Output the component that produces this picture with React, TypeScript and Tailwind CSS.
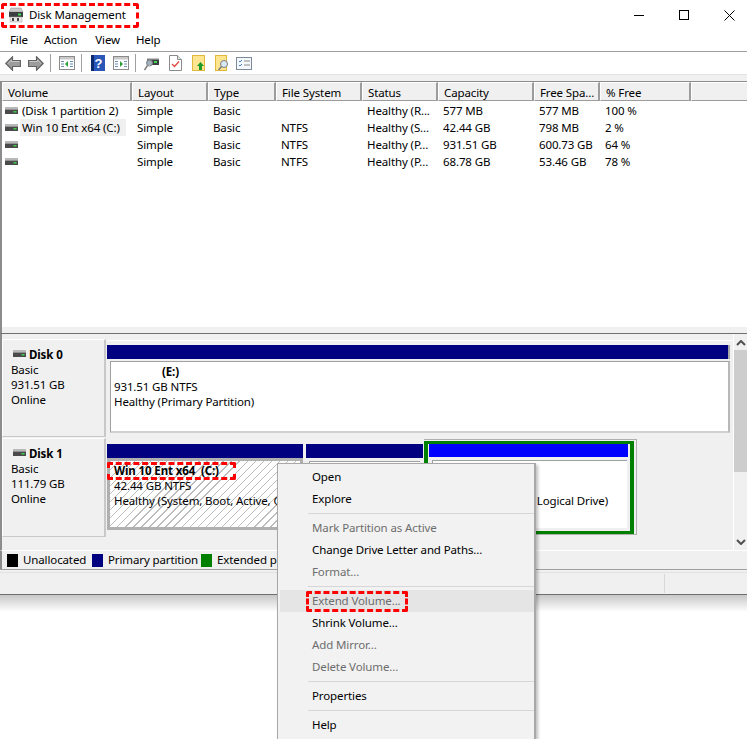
import React from "react";

const cols = [130, 76, 68, 86, 76, 96, 66, 91];
const heads = ["Volume", "Layout", "Type", "File System", "Status", "Capacity", "Free Spa...", "% Free"];
const rows = [
  ["(Disk 1 partition 2)", "Simple", "Basic", "", "Healthy (R...", "577 MB", "577 MB", "100 %"],
  ["Win 10 Ent x64 (C:)", "Simple", "Basic", "NTFS", "Healthy (S...", "42.44 GB", "798 MB", "2 %"],
  ["", "Simple", "Basic", "NTFS", "Healthy (P...", "931.51 GB", "600.73 GB", "64 %"],
  ["", "Simple", "Basic", "NTFS", "Healthy (P...", "68.78 GB", "53.46 GB", "78 %"],
];

function DriveIcon() {
  return (
    <svg width="13" height="8" viewBox="0 0 13 8" className="shrink-0">
      <rect x="0" y="0" width="13" height="2.5" fill="#b8b8b8" />
      <rect x="0" y="2.5" width="13" height="4.5" fill="#4a4a4a" />
      <rect x="8.5" y="4" width="3" height="1.5" fill="#3fd04a" />
    </svg>
  );
}

function AppIcon() {
  return (
    <svg width="16" height="16" viewBox="0 0 16 16">
      <path d="M3 1h10l2 4H1z" fill="#c9c9c9" stroke="#8a8a8a" strokeWidth="0.5" />
      <rect x="1" y="5" width="14" height="5" fill="#3c3f42" />
      <rect x="10" y="6.5" width="3" height="2" fill="#40d850" />
      <rect x="2" y="10" width="12" height="5" fill="#e8e8e8" stroke="#9a9a9a" strokeWidth="0.5" />
      <rect x="4" y="11" width="2" height="3" fill="#444" />
      <rect x="9" y="11" width="2" height="3" fill="#444" />
    </svg>
  );
}

function Arrow({ flip }: { flip?: boolean }) {
  return (
    <svg width="16" height="15" viewBox="0 0 16 15" className={flip ? "-scale-x-100" : ""}>
      <path d="M.8 7.5 7.5.8v3.7h8v6h-8v3.7z" fill="#9c9c9c" stroke="#636363" strokeWidth="1.2" />
      <path d="M3 7.5 6.5 4v1.5h8" fill="none" stroke="#c8c8c8" strokeWidth="1" />
    </svg>
  );
}

function Pane({ mode }: { mode: "l" | "r" }) {
  return (
    <svg width="16" height="14" viewBox="0 0 16 14">
      <rect x="0.5" y="0.5" width="15" height="13" fill="#fff" stroke="#8b8b8b" />
      <rect x="1" y="1" width="14" height="2.5" fill="#c9c9c9" />
      <path d="M2 5.5h3M2 8h3M2 10.5h3M11 5.5h3M11 8h3M11 10.5h3" stroke="#6b8fb5" strokeWidth="1.2" />
      {mode === "l" ? <path d="M9 5v6L6 8z" fill="#2f9e3a" /> : <path d="M7 5v6l3-3z" fill="#2f9e3a" />}
    </svg>
  );
}

function Toolbar() {
  return (
    <div className="h-[22px] shrink-0 flex items-center pl-[5px] bg-white">
      <Arrow />
      <div className="w-[7px]" />
      <Arrow flip />
      <div className="w-px h-[18px] bg-[#a0a0a0] ml-[6px] mr-[8px]" />
      <Pane mode="l" />
      <div className="w-px h-[18px] bg-[#a0a0a0] ml-[6px] mr-[9px]" />
      <svg width="14" height="16" viewBox="0 0 14 16">
        <rect width="14" height="16" fill="#2a56b8" />
        <rect x="0" y="0" width="3" height="16" fill="#0d2a70" />
        <text x="7.5" y="13" fontSize="13" fontWeight="700" textAnchor="middle" fill="#fff" fontFamily="Liberation Sans, sans-serif">?</text>
      </svg>
      <div className="w-[8px]" />
      <Pane mode="r" />
      <div className="w-px h-[18px] bg-[#a0a0a0] ml-[6px] mr-[8px]" />
      <svg width="15" height="16" viewBox="0 0 15 16">
        <rect x="3" y="4" width="12" height="6" fill="#3c3f42" />
        <rect x="3" y="3" width="12" height="1.5" fill="#c4c4c4" />
        <rect x="10" y="6" width="3" height="2" fill="#40d850" />
        <circle cx="5.5" cy="8" r="3" fill="#cfe3f2" fillOpacity="0.7" stroke="#7d7d7d" />
        <path d="M3.5 10.5 0.5 15" stroke="#7d7d7d" strokeWidth="1.5" />
      </svg>
      <div className="w-[10px]" />
      <svg width="13" height="16" viewBox="0 0 13 16">
        <path d="M.5.5h8l4 4v11H.5z" fill="#fff" stroke="#8b8b8b" />
        <path d="M8.5.5v4h4" fill="#e5e5e5" stroke="#8b8b8b" />
        <path d="M3 9l2.5 2.5L10 6.5" fill="none" stroke="#e04a3c" strokeWidth="1.3" />
      </svg>
      <div className="w-[10px]" />
      <svg width="13" height="16" viewBox="0 0 13 16">
        <rect x="0.5" y="0.5" width="12" height="15" fill="#ffe58f" stroke="#e0b93c" />
        <path d="M8.5 7 12 11h-2v4H7v-4H5z" fill="#1d9a2a" />
      </svg>
      <div className="w-[10px]" />
      <svg width="14" height="16" viewBox="0 0 14 16">
        <rect x="0.5" y="0.5" width="11" height="15" fill="#ffe58f" stroke="#e0b93c" />
        <circle cx="9" cy="9" r="3.5" fill="#d8e8f5" stroke="#7d7d7d" />
        <path d="M6.5 11.5 3.5 15" stroke="#7d7d7d" strokeWidth="1.5" />
      </svg>
      <div className="w-[7px]" />
      <svg width="16" height="13" viewBox="0 0 16 13">
        <rect x="0.5" y="0.5" width="15" height="12" fill="#f4f7fb" stroke="#7d8a99" />
        <path d="M3 4l1 1 2-2M3 8l1 1 2-2" fill="none" stroke="#3a7fd0" />
        <path d="M8 4h6M8 8h6" stroke="#8a8a8a" />
      </svg>
    </div>
  );
}

function Table() {
  return (
    <div className="h-[246px] shrink-0 bg-white border-l-2 border-[#8c8c8c] overflow-hidden">
      <div className="flex h-[20px] bg-white border-t border-[#8c8c8c]">
        {cols.map((w, i) => (
          <div
            key={i}
            style={{ width: w }}
            className="shrink-0 bg-[#f0f0f0] border-t border-l border-white border-r-2 border-r-[#9c9c9c] border-b border-b-[#9c9c9c] pl-[5px] pt-px leading-[17px]"
          >
            {heads[i]}
          </div>
        ))}
        <div className="flex-1 bg-[#f0f0f0] border-t border-l border-white border-b border-b-[#9c9c9c]" />
      </div>
      <div className="pt-px">
        {rows.map((r, ri) => (
          <div key={ri} className="flex h-[17px] leading-[17px]">
            {r.map((c, i) =>
              i === 0 ? (
                <div key={i} style={{ width: cols[i] }} className="shrink-0 pl-[3px] h-[17px] flex items-center gap-[2px] whitespace-nowrap overflow-hidden">
                  <DriveIcon />
                  <span className={ri === 1 ? "bg-[#f0f0f0] pl-[2px] pr-[6px]" : "pl-[2px]"}>{c}</span>
                </div>
              ) : (
                <div key={i} style={{ width: cols[i] }} className="shrink-0 pl-[5px] whitespace-nowrap overflow-hidden">
                  {c}
                </div>
              )
            )}
          </div>
        ))}
      </div>
    </div>
  );
}

function DiskLabel({ name, size, h }: { name: string; size: string; h: string }) {
  return (
    <div className={`${h} w-[104px] shrink-0 bg-[#f0f0f0] border-t border-l border-white border-r-2 border-r-[#c8c8c8] border-b border-b-[#c8c8c8] pl-[8px] pt-[6px] leading-[15px]`}>
      <div className="flex items-center h-[16px] pl-[2px] gap-[3px] font-bold">
        <DriveIcon />
        {name}
      </div>
      <div>Basic</div>
      <div>{size}</div>
      <div>Online</div>
    </div>
  );
}

function DiskArea() {
  return (
    <div className="flex h-[216px] shrink-0 bg-[#f0f0f0] border-l-2 border-[#8c8c8c]">
      <div className="flex-1 min-w-0 overflow-hidden pt-[5px]">
        <div className="flex h-[98px]">
          <DiskLabel name="Disk 0" size="931.51 GB" h="h-[98px]" />
          <div className="flex-1 min-w-0 ml-px mt-px border-t border-white pt-[4px]">
            <div className="w-[623px]">
              <div className="h-[14px] bg-[#000080] border-r-2 border-r-[#a8a8a8]" />
              <div className="h-[72px] mt-[2px] bg-white border-t border-l border-[#a0a0a0] border-r-2 border-r-[#b8b8b8] border-b-2 border-b-[#d0d0d0] ml-[3px] pl-[3px] pt-[2px] leading-[15px] whitespace-nowrap">
                <div className="font-bold pl-[48px]">(E:)</div>
                <div>931.51 GB NTFS</div>
                <div>Healthy (Primary Partition)</div>
              </div>
            </div>
          </div>
        </div>
        <div className="flex h-[99px] mt-px">
          <DiskLabel name="Disk 1" size="111.79 GB" h="h-[99px]" />
          <div className="flex ml-px pt-[6px] h-[97px]">
            <div className="w-[196px]">
              <div className="h-[14px] bg-[#000080]" />
              <div className="h-[72px] bg-[repeating-linear-gradient(135deg,#bdbdbd_0,#bdbdbd_1px,#ffffff_1px,#ffffff_5.7px)] border-[3px] border-[#b0b0b0] pl-[4px] pt-[2px] leading-[15px] whitespace-nowrap overflow-hidden">
                <div className="font-bold">Win 10 Ent x64&nbsp;&nbsp;(C:)</div>
                <div>42.44 GB NTFS</div>
                <div>Healthy (System, Boot, Active, Crash Dump)</div>
              </div>
            </div>
            <div className="w-[117px] ml-[3px]">
              <div className="h-[14px] bg-[#000080]" />
              <div className="h-[69px] mt-[3px] bg-white border-t border-l border-[#a0a0a0] mx-[3px]" />
            </div>
            <div className="ml-px -mt-[6px] pt-px w-[213px]">
              <div className="h-[96px] border-t border-r border-b border-[#b0b0b0]">
                <div className="h-[93px] w-[210px] mt-px border-y-[3px] border-x-[4px] border-[#008000] bg-[#f0f0f0]">
                  <div className="h-[13px] bg-[#0000ff] ml-px mr-[2px]" />
                  <div className="h-[68px] mt-[3px] ml-[4px] mr-[3px] bg-white border-t border-l border-[#a0a0a0] flex items-center justify-end pr-[19px] pt-[13px] whitespace-nowrap">
                    Logical Drive)
                  </div>
                </div>
              </div>
            </div>
          </div>
        </div>
      </div>
      <div className="w-[14px] shrink-0 flex flex-col items-center border-l border-white">
        <svg width="10" height="6" viewBox="0 0 10 6" className="mt-[6px] mb-[4px]">
          <path d="M1 5l4-4 4 4" fill="none" stroke="#505050" strokeWidth="2" />
        </svg>
        <div className="w-full h-[122px] bg-[#cdcdcd]" />
        <div className="flex-1" />
        <svg width="10" height="6" viewBox="0 0 10 6" className="mb-[5px]">
          <path d="M1 1l4 4 4-4" fill="none" stroke="#505050" strokeWidth="2" />
        </svg>
      </div>
    </div>
  );
}

function Legend() {
  const items: [string, string, string][] = [
    ["bg-black", "Unallocated", "w-[85px]"],
    ["bg-[#000080]", "Primary partition", "w-[109px]"],
    ["bg-[#008000]", "Extended partition", "w-[140px]"],
  ];
  return (
    <div className="h-[19px] shrink-0 flex items-center pl-[5px] bg-[#f0f0f0] border-l-2 border-[#8c8c8c] border-t border-t-white">
      {items.map(([c, t, w]) => (
        <div key={t} className={`flex items-center gap-[5px] ${w} shrink-0 whitespace-nowrap`}>
          <div className={`w-[11px] h-[13px] ${c}`} />
          {t}
        </div>
      ))}
    </div>
  );
}

function MenuItem({ label, disabled, active }: { label: string; disabled?: boolean; active?: boolean }) {
  return (
    <div className={`h-[22px] ml-[2px] pl-[32px] leading-[22px] ${disabled ? "text-[#6d6d6d]" : "text-black"} ${active ? "bg-[#e5e5e5]" : ""}`}>
      {label}
    </div>
  );
}

function MenuSep() {
  return <div className="h-px bg-[#d7d7d7] ml-[30px] my-[3px]" />;
}

function ContextMenu() {
  return (
    <div className="absolute left-[277px] top-[463px] w-[259px] h-[276px] bg-[#f2f2f2] border-t border-l border-r-2 border-[#a8a8a8] pt-[2px] shadow-[2px_2px_3px_rgba(0,0,0,0.25)]">
      <MenuItem label="Open" />
      <MenuItem label="Explore" />
      <MenuSep />
      <MenuItem label="Mark Partition as Active" disabled />
      <MenuItem label="Change Drive Letter and Paths..." />
      <MenuItem label="Format..." disabled />
      <MenuSep />
      <MenuItem label="Extend Volume..." disabled active />
      <MenuItem label="Shrink Volume..." />
      <MenuItem label="Add Mirror..." disabled />
      <MenuItem label="Delete Volume..." disabled />
      <MenuSep />
      <MenuItem label="Properties" />
      <MenuSep />
      <MenuItem label="Help" />
    </div>
  );
}

export default function App() {
  return (
    <div className="relative w-[747px] h-[739px] bg-white overflow-hidden text-[11.5px] tracking-[-0.12px] text-black font-['Noto_Sans',sans-serif]">
      <div className="h-[612px] bg-[linear-gradient(to_bottom,#c8c8c8_0,#c8c8c8_595px,#ffffff_612px)]">
        <div className="h-[595px] flex flex-col bg-white border-b border-[#6e6e6e]">
          <div className="h-[30px] flex items-center shrink-0 pl-[8px]">
            <AppIcon />
            <span className="ml-[5px]">Disk Management</span>
            <div className="flex-1" />
            <div className="flex items-center">
              <div className="w-[10px] h-px bg-black mr-[35px]" />
              <div className="w-[10px] h-[10px] border border-black mr-[35px]" />
              <svg width="11" height="11" viewBox="0 0 11 11" className="mr-[12px]">
                <path d="M.5.5l10 10M10.5.5l-10 10" stroke="#000" strokeWidth="1" />
              </svg>
            </div>
          </div>
          <div className="h-[22px] flex items-center gap-[16px] pl-[10px] pb-px border-b border-[#a0a0a0] shrink-0">
            <span>File</span>
            <span className="mr-[2px]">Action</span>
            <span>View</span>
            <span>Help</span>
          </div>
          <Toolbar />
          <div className="h-[7px] shrink-0 bg-[#f0f0f0] border-t border-[#e4e4e4]" />
          <Table />
          <div className="h-[7px] shrink-0 bg-[#f0f0f0] border-l-2 border-[#8c8c8c] border-b border-b-[#707070]" />
          <DiskArea />
          <Legend />
          <div className="flex-1 bg-[#f0f0f0] border-t border-[#a0a0a0] flex">
            <div className="flex-1 mt-[2px] border-t border-[#e2e2e2] flex justify-end">
              <div className="w-[83px] border-l border-[#d8d8d8] my-px" />
            </div>
          </div>
        </div>
      </div>
      <ContextMenu />
      <div className="absolute left-[1px] top-[3px] w-[138px] h-[25px] border-[3px] border-dashed border-[#ff0000] rounded-[3px]" />
      <div className="absolute left-[107px] top-[462px] w-[129px] h-[18px] border-[3px] border-dashed border-[#ff0000] rounded-[2px]" />
      <div className="absolute left-[306px] top-[591px] w-[102px] h-[21px] border-[3px] border-dashed border-[#ff0000] rounded-[2px]" />
    </div>
  );
}
